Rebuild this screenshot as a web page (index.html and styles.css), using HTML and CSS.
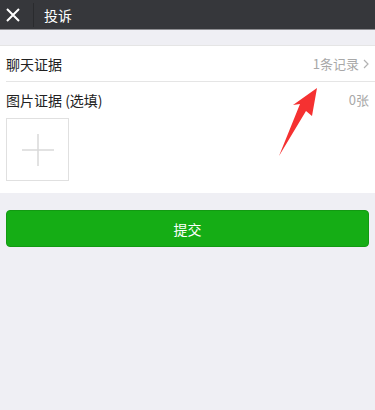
FILE: index.html
```html
<!DOCTYPE html>
<html lang="zh-CN">
<head>
<meta charset="utf-8">
<link rel="stylesheet" href="styles.css">
</head>
<body>
<header class="topbar">
  <span class="close">
    <svg width="14" height="14" viewBox="0 0 14 14"><path d="M1 1L13 13M13 1L1 13" stroke="#fff" stroke-width="2" fill="none"/></svg>
  </span>
  <span class="sep"></span>
  <span class="title">投诉</span>
</header>
<main class="content">
  <section class="card">
    <div class="row row-first">
      <span class="label">聊天证据</span>
      <span class="value">1条记录<svg class="chev" width="6" height="10" viewBox="0 0 6 10"><path d="M1 1L5 5L1 9" stroke="#b2b2b2" stroke-width="1.2" fill="none"/></svg></span>
    </div>
    <div class="row row-second">
      <span class="label">图片证据 (选填)</span>
      <span class="value">0张</span>
    </div>
    <div class="upload">
      <svg width="32" height="32" viewBox="0 0 32 32"><path d="M16 0V32M0 16H32" stroke="#d9d9d9" stroke-width="1.5"/></svg>
    </div>
  </section>
  <button class="submit">提交</button>
</main>
<svg class="arrow" width="60" height="80" viewBox="270 80 60 80"><polygon points="317,88 312,116 306,111 279,156 300,104 293,105" fill="#f53131"/></svg>
</body>
</html>
```
FILE: styles.css
```css
html, body {
  margin: 0;
  padding: 0;
}
body {
  width: 375px;
  height: 410px;
  background: #efeff4;
  font-family: "Noto Sans CJK SC", "Noto Sans", sans-serif;
  position: relative;
  overflow: hidden;
}
.topbar {
  height: 29px;
  background: #36373b;
  border-bottom: 1px solid #8e8e92;
  display: flex;
  align-items: center;
}
.close {
  width: 14px;
  height: 14px;
  margin-left: 6px;
  display: flex;
}
.sep {
  width: 1px;
  height: 24px;
  background: #2a2b2e;
  margin-left: 13px;
}
.title {
  color: #fff;
  font-size: 14px;
  margin-left: 10px;
  line-height: 1;
}
.content {
  padding-top: 15px;
}
.card {
  background: #fff;
  border-top: 1px solid #e5e5e5;
  display: flex;
  flex-direction: column;
  padding-bottom: 12px;
}
.row {
  display: flex;
  align-items: center;
  justify-content: space-between;
  margin-left: 6px;
  padding-right: 6px;
}
.row-first {
  height: 35px;
  border-bottom: 1px solid #e5e5e5;
}
.row-second {
  height: 35px;
}
.label {
  font-size: 14px;
  color: #222;
}
.value {
  font-size: 13px;
  color: #a8a8a8;
  display: flex;
  align-items: center;
}
.chev {
  margin-left: 4px;
}
.upload {
  width: 61px;
  height: 61px;
  border: 1px solid #e0e0e0;
  margin: 1px 0 0 6px;
  display: flex;
  align-items: center;
  justify-content: center;
}
.submit {
  display: flex;
  align-items: center;
  justify-content: center;
  margin: 17px 6px 0;
  width: calc(100% - 12px);
  height: 37px;
  background: #15ad15;
  color: #fff;
  border: 1px solid #129a12;
  border-radius: 4px;
  font-family: inherit;
  font-size: 14px;
  padding: 0;
}
.arrow {
  position: absolute;
  left: 270px;
  top: 80px;
}
```
